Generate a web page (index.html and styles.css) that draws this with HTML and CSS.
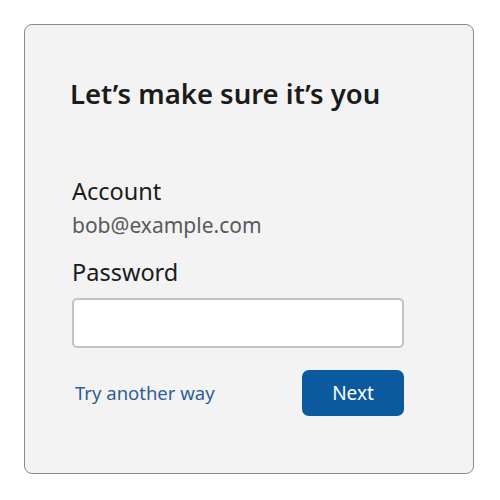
FILE: index.html
```html
<!DOCTYPE html>
<html>
<head>
<meta charset="utf-8">
<link rel="stylesheet" href="styles.css">
</head>
<body>
<div class="card">
  <h1 class="title">Let’s make sure it’s you</h1>
  <div class="label account">Account</div>
  <div class="email">bob@example.com</div>
  <div class="label password">Password</div>
  <input class="input" type="password">
  <div class="actions">
    <a class="link">Try another way</a>
    <button class="next">Next</button>
  </div>
</div>
</body>
</html>
```
FILE: styles.css
```css
html, body { margin: 0; padding: 0; background: #ffffff; }
body { padding: 24px; font-family: "Noto Sans", "Open Sans", sans-serif; }
.card {
  box-sizing: border-box;
  width: 450px;
  height: 450px;
  border: 1px solid #8a8a8a;
  border-radius: 8px;
  background: #f3f3f3;
  padding: 51px 69px 0 47px;
  display: flex;
  flex-direction: column;
}
.title {
  margin: 0 0 0 -2px;
  font-size: 27.5px;
  font-weight: 600;
  color: #1b1b1b;
  line-height: 36px;
}
.label { font-size: 23.5px; color: #1b1b1b; line-height: 30px; }
.account { margin-top: 64px; }
.email { font-size: 21px; color: #5a5a5a; line-height: 28px; margin-top: 5px; }
.password { margin-top: 18px; }
.input {
  box-sizing: border-box;
  margin: 11px 0 0;
  height: 50px;
  width: 332px;
  border: 2px solid #c2c2c2;
  border-radius: 5px;
  background: #fff;
}
.actions {
  margin-top: 22px;
  display: flex;
  justify-content: space-between;
  align-items: center;
  width: 332px;
}
.link { color: #2e5d99; font-size: 18.5px; margin: -2px 0 0 3px; }
.next {
  width: 102px;
  height: 46px;
  border: none;
  border-radius: 7px;
  background: #0b5aa0;
  color: #fff;
  font-family: inherit;
  font-size: 19px;
}
```
